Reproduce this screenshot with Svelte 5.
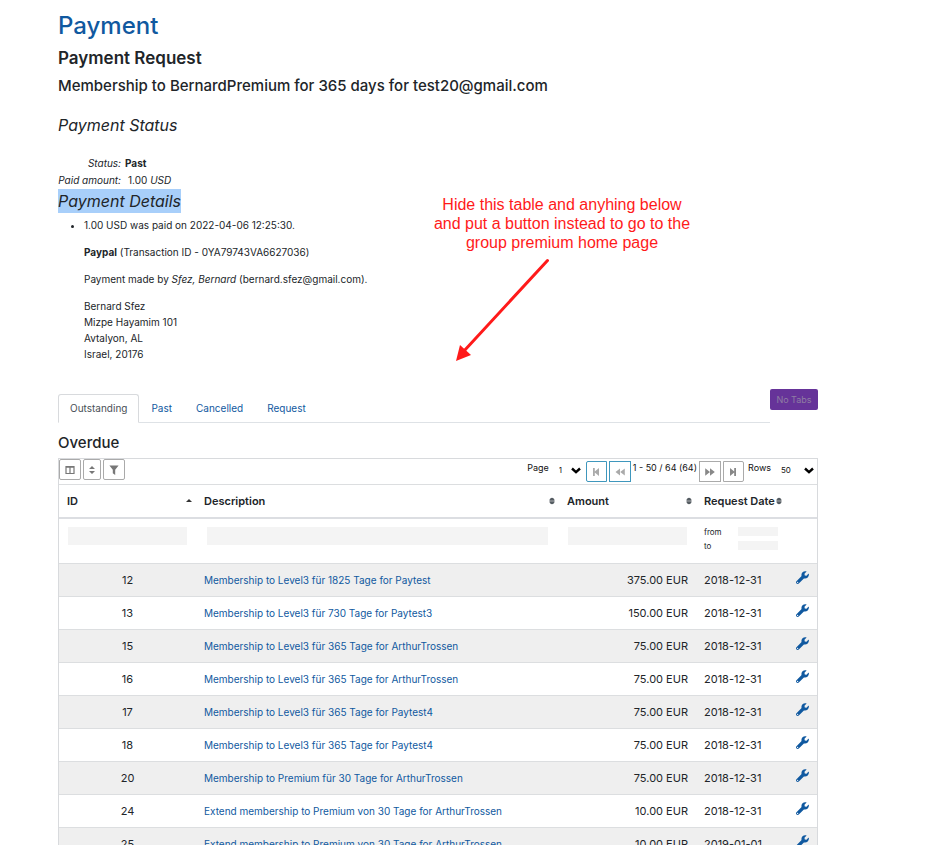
<script>
  const tabs = ['Outstanding', 'Past', 'Cancelled', 'Request'];
  let activeTab = 'Outstanding';

  const requests = [
    { id: 12, description: 'Membership to Level3 für 1825 Tage for Paytest', amount: '375.00 EUR', date: '2018-12-31' },
    { id: 13, description: 'Membership to Level3 für 730 Tage for Paytest3', amount: '150.00 EUR', date: '2018-12-31' },
    { id: 15, description: 'Membership to Level3 für 365 Tage for ArthurTrossen', amount: '75.00 EUR', date: '2018-12-31' },
    { id: 16, description: 'Membership to Level3 für 365 Tage for ArthurTrossen', amount: '75.00 EUR', date: '2018-12-31' },
    { id: 17, description: 'Membership to Level3 für 365 Tage for Paytest4', amount: '75.00 EUR', date: '2018-12-31' },
    { id: 18, description: 'Membership to Level3 für 365 Tage for Paytest4', amount: '75.00 EUR', date: '2018-12-31' },
    { id: 20, description: 'Membership to Premium für 30 Tage for ArthurTrossen', amount: '75.00 EUR', date: '2018-12-31' },
    { id: 24, description: 'Extend membership to Premium von 30 Tage for ArthurTrossen', amount: '10.00 EUR', date: '2018-12-31' },
    { id: 25, description: 'Extend membership to Premium von 30 Tage for ArthurTrossen', amount: '10.00 EUR', date: '2019-01-01' }
  ];
</script>

<main class="page">
  <h1>Payment</h1>
  <h2 class="request">Payment Request</h2>
  <h3>Membership to BernardPremium for 365 days for test20@gmail.com</h3>

  <h2 class="section status-title">Payment Status</h2>
  <dl class="status">
    <dt>Status:</dt>
    <dd><b>Past</b></dd>
    <dt>Paid amount:</dt>
    <dd class="paid">1.00 <i>USD</i></dd>
  </dl>

  <section class="details">
    <h2 class="section"><mark>Payment Details</mark></h2>
    <ul>
      <li>
        <p>1.00 USD was paid on 2022-04-06 12:25:30.</p>
        <p><b>Paypal</b> (Transaction ID - 0YA79743VA6627036)</p>
        <p>Payment made by <i>Sfez, Bernard</i> (bernard.sfez@gmail.com).</p>
        <p>Bernard Sfez<br />Mizpe Hayamim 101<br />Avtalyon, AL<br />Israel, 20176</p>
      </li>
    </ul>

    <div class="note">
      <p>Hide this table and anyhing below<br />and put a button instead to go to the<br />group premium home page</p>
      <svg width="94" height="104" viewBox="0 0 94 104" aria-hidden="true">
        <path d="M91.500 2.500 8 93" stroke="#ff1a1a" stroke-width="3" stroke-linecap="round" />
        <path d="M0 103 4 87 15 97Z" fill="#ff1a1a" stroke="none" />
      </svg>
    </div>
  </section>

  <div class="tab-row">
    <nav>
      {#each tabs as tab}
        <a href="#{tab}" class:active={tab === activeTab} on:click={() => (activeTab = tab)}>{tab}</a>
      {/each}
    </nav>
    <button class="no-tabs">No Tabs</button>
  </div>

  <h3 class="overdue">Overdue</h3>

  <div class="grid">
    <div class="toolbar">
      <div class="tools">
        <button aria-label="Columns">
          <svg width="10" height="10" viewBox="0 0 10 10"><path d="M1 1.500h8v7H1zM1 2.200h8M5 2v6.500" fill="none" stroke="#777" stroke-width="1.200" /></svg>
        </button>
        <button class="slim" aria-label="Sort">
          <svg width="6" height="8" viewBox="0 0 6 8"><path d="M3 0 6 3H0zM3 8 0 5h6z" fill="#777" /></svg>
        </button>
        <button aria-label="Filter">
          <svg width="10" height="10" viewBox="0 0 10 10"><path d="M.4.500h9.200L6.200 4.700V10L3.800 8.200V4.700z" fill="#777" /></svg>
        </button>
      </div>

      <div class="pager">
        <label for="page">Page</label>
        <span class="select">
          <select id="page"><option>1</option></select>
          <svg width="10" height="7" viewBox="0 0 10 7"><path d="M1 1.500 5 5.200 9 1.500" fill="none" stroke="#000" stroke-width="2.400" /></svg>
        </span>
        <span class="buttons">
          <button class="current first" aria-label="First page">
            <svg width="8" height="8" viewBox="0 0 8 8"><path d="M1 0h1.800v3.500L7 0v8L2.800 4.500V8H1z" fill="#aaa" /></svg>
          </button>
          <button class="current" aria-label="Previous page">
            <svg width="10" height="8" viewBox="0 0 10 8"><path d="M5 .5v7L.5 4zM9.800.5v7L5.200 4z" fill="#aaa" /></svg>
          </button>
        </span>
        <span class="count">1 - 50 / 64 (64)</span>
        <span class="buttons">
          <button aria-label="Next page">
            <svg width="10" height="8" viewBox="0 0 10 8"><path d="M.2.300v7.400L5 4zM5 .3v7.400L9.800 4z" fill="#888" /></svg>
          </button>
          <button class="last" aria-label="Last page">
            <svg width="8" height="8" viewBox="0 0 8 8"><path d="M7 0H5.200v3.500L1 0v8l4.200-3.500V8H7z" fill="#888" /></svg>
          </button>
        </span>
        <label class="rows" for="rows">Rows</label>
        <span class="select wide">
          <select id="rows"><option>50</option></select>
          <svg width="10" height="7" viewBox="0 0 10 7"><path d="M1 1.500 5 5.200 9 1.500" fill="none" stroke="#000" stroke-width="2.400" /></svg>
        </span>
      </div>
    </div>

    <table>
      <colgroup>
        <col class="c-id" />
        <col />
        <col class="c-amount" />
        <col class="c-date" />
        <col class="c-action" />
      </colgroup>
      <thead>
        <tr class="heads">
          <th>
            <div>ID <svg width="6" height="6" viewBox="0 0 6 6"><path d="M3 1 6 4H0z" fill="#333" /></svg></div>
          </th>
          <th>
            <div>Description <svg width="6" height="8" viewBox="0 0 6 8"><path d="M.4 3.700C.6 1.500 1.800.8 3 .8s2.400.7 2.600 2.900zM.4 4.300h5.200C5.400 6.500 4.200 7.200 3 7.200S.6 6.500.4 4.300z" fill="#555c62" /></svg></div>
          </th>
          <th>
            <div>Amount <svg width="6" height="8" viewBox="0 0 6 8"><path d="M.4 3.700C.6 1.500 1.800.8 3 .8s2.400.7 2.600 2.900zM.4 4.300h5.200C5.400 6.500 4.200 7.200 3 7.200S.6 6.500.4 4.300z" fill="#555c62" /></svg></div>
          </th>
          <th colspan="2">
            <div class="date-head">Request Date <svg width="6" height="8" viewBox="0 0 6 8"><path d="M.4 3.700C.6 1.500 1.800.8 3 .8s2.400.7 2.600 2.900zM.4 4.300h5.200C5.400 6.500 4.200 7.200 3 7.200S.6 6.500.4 4.300z" fill="#555c62" /></svg></div>
          </th>
        </tr>
        <tr class="filters">
          <td><input type="text" aria-label="Filter ID" /></td>
          <td class="description"><input type="text" aria-label="Filter description" /></td>
          <td><input type="text" aria-label="Filter amount" /></td>
          <td class="dates">
            <label>from <input type="text" /></label>
            <label>to <input type="text" /></label>
          </td>
          <td></td>
        </tr>
      </thead>
      <tbody>
        {#each requests as request (request.id)}
          <tr>
            <td class="id">{request.id}</td>
            <td class="link"><a href="#request-{request.id}">{request.description}</a></td>
            <td class="amount">{request.amount}</td>
            <td>{request.date}</td>
            <td class="action">
              <a href="#edit-{request.id}" aria-label="Edit {request.id}">
                <svg width="13" height="13" viewBox="0 0 512 512"><path fill="#1059a0" d="M507 116c-2-9-13-12-20-5l-74 74-68-11-11-68 74-74c7-7 4-18-5-20C348-1 295 13 257 51c-41 41-53 99-37 150L19 402c-25 25-25 66 0 91s66 25 91 0l201-201c51 16 110 3 150-38 38-38 52-91 46-138zM64 472a24 24 0 1 1 0-48 24 24 0 0 1 0 48z" /></svg>
              </a>
            </td>
          </tr>
        {/each}
      </tbody>
    </table>
  </div>
</main>

<style>
  :global(body) {
    margin: 0;
    background: #fff;
  }

  .page {
    padding: 10px 110px 0 58px;
    font-family: Inter, 'Liberation Sans', sans-serif;
    font-size: 10px;
    line-height: 16px;
    color: #212529;
  }

  h1, h2, h3, p, ul, dl, dd {
    margin: 0;
  }

  a {
    color: #1059a0;
    text-decoration: none;
  }

  button, input, select {
    box-sizing: border-box;
    margin: 0;
    padding: 0;
    font-family: inherit;
  }

  svg {
    display: block;
    flex: none;
  }

  h1 {
    font-size: 24px;
    line-height: 32px;
    font-weight: 500;
    color: #1059a0;
  }

  h2.request {
    margin-top: 6px;
    font-size: 17px;
    line-height: 20px;
    font-weight: 600;
  }

  h3 {
    margin-top: 8px;
    font-size: 15px;
    line-height: 20px;
    font-weight: 500;
  }

  h2.section {
    font-size: 16px;
    line-height: 24px;
    font-weight: 400;
    font-style: italic;
  }

  h2.status-title {
    margin-top: 17px;
  }

  .status {
    display: grid;
    grid-template-columns: 63px auto;
    column-gap: 4px;
    margin-top: 18px;
    line-height: 17px;
  }

  .status dt {
    text-align: right;
    font-style: italic;
  }

  .paid {
    padding-left: 3px;
  }

  .details {
    position: relative;
  }

  mark {
    display: inline-block;
    background: #a8cffa;
    color: inherit;
  }

  .details ul {
    margin-top: 4px;
    padding-left: 26px;
  }

  .details li p + p {
    margin-top: 11px;
  }

  .note {
    position: absolute;
    top: 6px;
    left: 369px;
    width: 270px;
    font: 16px/19px 'Liberation Sans', sans-serif;
    color: #ff1a1a;
    text-align: center;
  }

  .note svg {
    margin: 6px 0 0 29px;
  }

  .tab-row {
    display: flex;
    align-items: flex-start;
    margin-top: 27px;
  }

  nav {
    display: flex;
    flex: 1;
    margin-top: 5px;
    border-bottom: 1px solid #dee2e6;
  }

  nav a {
    margin-bottom: -1px;
    padding: 5px 11px 6px;
    border: 1px solid transparent;
    border-radius: 3px 3px 0 0;
  }

  nav a.active {
    background: #fff;
    border-color: #d8dadd #d8dadd #fff;
    color: #495057;
  }

  .no-tabs {
    width: 48px;
    height: 21px;
    border: 0;
    border-radius: 2px;
    background: #663399;
    color: #8f7da3;
    font-size: 9px;
  }

  h3.overdue {
    margin-top: 10px;
    margin-bottom: 5px;
  }

  .grid {
    border: 1px solid #d8dadd;
    border-bottom: 0;
  }

  .toolbar {
    display: flex;
    justify-content: space-between;
    height: 25px;
    border-bottom: 1px solid #dcdee0;
  }

  .tools {
    display: flex;
    gap: 2px;
  }

  .toolbar button {
    display: flex;
    align-items: center;
    justify-content: center;
    width: 22px;
    height: 21px;
    background: #fff;
    border: 1px solid #aaa;
    border-radius: 2px;
  }

  .toolbar button.slim {
    width: 18px;
  }

  .pager {
    display: flex;
    font-size: 9px;
    line-height: 18px;
    color: #111;
  }

  .pager .buttons {
    display: flex;
    gap: 2px;
    padding-top: 2px;
  }

  .pager .buttons button {
    border-radius: 0;
  }

  .pager .buttons .first {
    width: 21px;
    border-radius: 2px 0 0 2px;
  }

  .pager .buttons .last {
    width: 21px;
    border-radius: 0 2px 2px 0;
  }

  .pager .buttons .current {
    border-color: #3f97bd;
  }

  .count {
    padding: 0 2px;
  }

  .rows {
    padding-left: 4px;
  }

  .select {
    display: grid;
    width: 37px;
    height: 22px;
    align-items: center;
  }

  .select.wide {
    width: 46px;
  }

  .select select, .select svg {
    grid-area: 1 / 1;
  }

  .select select {
    width: 100%;
    padding-left: 10px;
    border: 0;
    background: none;
    appearance: none;
    font-size: 8px;
    color: #111;
  }

  .select svg {
    justify-self: end;
    margin-right: 5px;
    pointer-events: none;
  }

  .select.wide svg {
    margin-right: 3px;
  }

  table {
    width: 100%;
    table-layout: fixed;
    border-collapse: separate;
    border-spacing: 0;
    font-size: 11px;
  }

  .c-id {
    width: 137px;
  }

  .c-amount {
    width: 137px;
  }

  .c-date {
    width: 90px;
  }

  .c-action {
    width: 31px;
  }

  th, td {
    box-sizing: border-box;
    height: 33px;
    padding: 0 8px;
    text-align: left;
  }

  .heads th {
    height: 34px;
    border-bottom: 2px solid #dcdee2;
    font-weight: 600;
  }

  .heads div {
    display: flex;
    align-items: center;
    justify-content: space-between;
    margin-right: -4px;
  }

  .heads .date-head {
    justify-content: flex-start;
    gap: 1px;
  }

  .filters td {
    height: 44px;
    padding: 8px 9px 0;
    vertical-align: top;
  }

  .filters .description {
    padding: 8px 11px 0;
  }

  .filters .dates {
    padding: 8px 8px 0;
  }

  .filters input {
    display: block;
    width: 100%;
    height: 18px;
    border: 0;
    background: #f4f4f4;
  }

  .filters label {
    display: flex;
    align-items: center;
    justify-content: space-between;
    height: 9px;
    margin-bottom: 5px;
    font-size: 8px;
  }

  .filters label input {
    width: 40px;
    height: 9px;
  }

  tbody td {
    border-top: 1px solid #dcdee0;
  }

  tbody tr:nth-child(odd) {
    background: #efefef;
  }

  td.link {
    font-size: 10px;
  }

  td.id {
    text-align: center;
  }

  td.amount {
    text-align: right;
  }

  td.action {
    padding: 0 8px 6px 10px;
  }
</style>
